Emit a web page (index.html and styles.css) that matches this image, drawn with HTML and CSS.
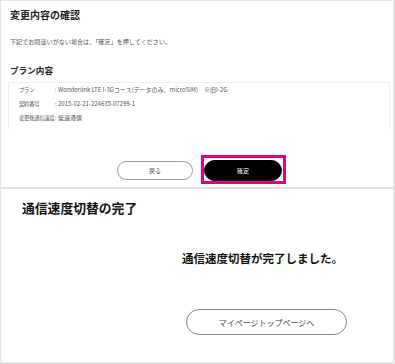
FILE: index.html
```html
<!DOCTYPE html>
<html lang="ja">
<head>
  <meta charset="UTF-8">
  <meta name="viewport" content="width=device-width, initial-scale=1.0">
  <title>通信速度切替</title>
  <link rel="stylesheet" href="styles.css">
</head>
<body>
  <div class="page">
    <section class="confirm">
      <h1>変更内容の確認</h1>
      <p class="lead">下記でお間違いがない場合は、「確定」を押してください。</p>
      <h2>プラン内容</h2>
      <dl class="plan">
        <div class="row"><dt>プラン</dt><dd>: Wonderlink LTE I-3Gコース(データのみ、microSIM)　※旧I-2G</dd></div>
        <div class="row"><dt>契約番号</dt><dd>: 2015-02-21-224635-07299-1</dd></div>
        <div class="row"><dt>変更後通信速度</dt><dd>: 低速通信</dd></div>
      </dl>
      <div class="actions">
        <button class="btn btn-back">戻る</button>
        <button class="btn btn-ok">確定<span class="mark"></span></button>
      </div>
    </section>
    <section class="done">
      <h1>通信速度切替の完了</h1>
      <p class="msg">通信速度切替が完了しました。</p>
      <button class="btn-top">マイページトップページへ</button>
    </section>
  </div>
</body>
</html>
```

FILE: styles.css
```css
* {
  margin: 0;
  padding: 0;
  box-sizing: border-box;
}
body {
  background: #fff;
  color: #222;
  font-family: 'Noto Sans CJK JP', 'Noto Sans', sans-serif;
}
.page {
  width: 395px;
  height: 364px;
  border: 1px solid #e4e4e4;
  border-right-width: 2px;
  border-bottom-width: 2px;
}
.confirm {
  height: 188px;
  padding: 8px 2px 0 9px;
  border-bottom: 2px solid #e2e2e2;
}
.confirm h1 {
  font-size: 10px;
  line-height: 12px;
  font-weight: 700;
}
.lead {
  margin-top: 17px;
  font-size: 6.1px;
  line-height: 8px;
  color: #555;
}
.confirm h2 {
  margin-top: 19px;
  font-size: 8.6px;
  line-height: 10px;
  font-weight: 700;
}
.plan {
  margin: 7px 1px 0 -2px;
  padding: 0 0 4px 10px;
  border: 1px solid #efefef;
  border-bottom-color: #fff;
  color: #555;
}
.row {
  display: flex;
  line-height: 14px;
  white-space: nowrap;
}
.row dt {
  flex: 0 0 36px;
  font-size: 5.3px;
  letter-spacing: -0.2px;
}
.row dd {
  font-size: 6px;
}
.actions {
  display: flex;
  align-items: center;
  gap: 11px;
  margin-top: 30px;
  padding-left: 107px;
  height: 21px;
}
.btn {
  font-family: inherit;
  font-size: 6px;
  cursor: pointer;
  border-radius: 11px;
}
.btn-back {
  width: 76px;
  height: 19px;
  background: #fff;
  border: 1px solid #999;
  color: #555;
}
.btn-ok {
  position: relative;
  width: 78px;
  height: 21px;
  background: #000;
  border: 1px solid #000;
  color: #fff;
}
.mark {
  position: absolute;
  top: -6px;
  left: -4px;
  width: 85px;
  height: 29px;
  border: 3px solid #e4007f;
}
.done {
  padding: 11px 0 0 21px;
}
.done h1 {
  font-size: 12.8px;
  line-height: 16px;
  font-weight: 700;
  color: #111;
}
.msg {
  margin: 35px 0 0 160px;
  font-size: 11.5px;
  line-height: 14px;
  font-weight: 700;
  color: #111;
}
.btn-top {
  display: block;
  margin: 44px 0 0 164px;
  width: 161px;
  height: 26px;
  border: 1px solid #888;
  border-radius: 13px;
  background: #fff;
  color: #444;
  font-family: inherit;
  font-size: 8px;
  cursor: pointer;
}
```
